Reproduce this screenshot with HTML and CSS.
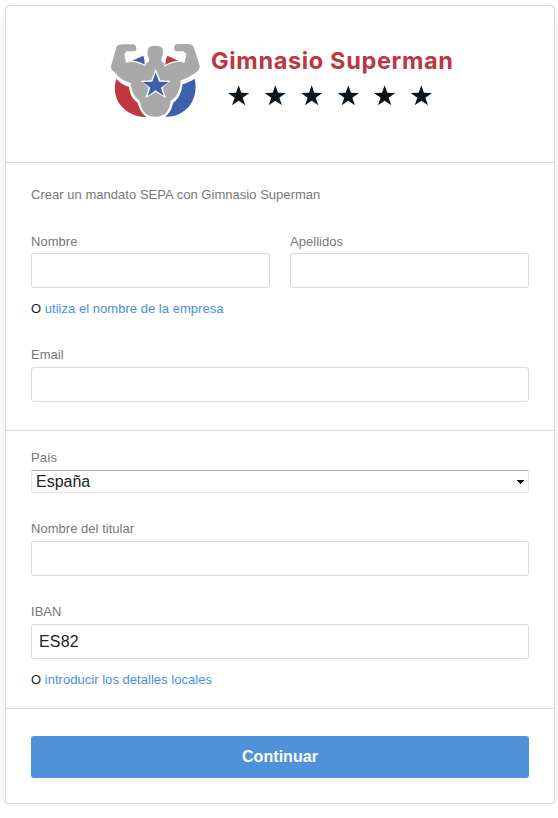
FILE: index.html
```html
<!DOCTYPE html>
<html lang="es">
<head>
<meta charset="utf-8">
<title>Gimnasio Superman</title>
<link rel="stylesheet" href="styles.css">
</head>
<body>
<main class="card">
  <header class="brand">
    <svg class="logo" viewBox="0 0 360 90" role="img" aria-label="Gimnasio Superman">
      <defs><path id="star" d="M0-32 8-10 32-9 12 5 20 28 0 14-20 28-12 5-32-9-8-10Z"/></defs>
      <g transform="scale(.33333)">
        <path fill="#bd3640" d="M49 131C40 158 45 190 62 211C81 234 108 247 140 246C126 237 119 222 113 203C97 193 90 178 87 156C73 151 60 144 49 131Z"/>
        <path fill="#3d60ad" d="M284 131C290 158 287 185 271 209C253 233 226 247 195 245C209 235 215 223 219 204C235 193 243 177 248 148C261 143 274 138 284 131Z"/>
        <path fill="#a9a9a9" d="M50 34Q58 27 71 28L101 28Q108 30 109 38Q111 47 102 49L81 49L74 55L74 66L78 84C92 77 107 80 119 86C133 89 143 84 148 78L146 67Q140 57 144 43Q145 32 166 32Q187 32 188 44Q192 57 185 67L184 78C189 84 199 89 212 86C224 80 239 77 253 84L258 66L258 55L250 49L230 49Q222 47 223 38Q222 30 230 28L263 27Q276 27 281 35L299 92Q299 105 289 112Q270 126 242 137C240 168 231 185 212 197C210 218 203 231 191 239Q167 252 142 239C129 231 123 217 119 197C102 186 95 170 92 145Q60 134 43 111Q32 104 33 93Z"/>
        <path fill="#fff" stroke="#fff" stroke-width="7" stroke-linejoin="round" d="M96 77 130 62Q135 75 134 89Q117 78 96 77ZM235 77 202 62Q196 75 196 90Q213 78 235 77Z"/>
        <path fill="#3d60ad" d="M96 77 130 62Q135 75 134 89Q117 78 96 77Z"/>
        <path fill="#bd3640" d="M235 77 202 62Q196 75 196 90Q213 78 235 77Z"/>
        <path fill="#fff" d="M167 101 181 136 212 137 188 158 198 190 167 171 136 190 146 158 122 137 154 136Z"/>
        <path fill="#3d60ad" d="M167 112 177 140 206 141 183 158 191 183 167 166 143 183 151 158 128 141 157 140Z"/>
        <g fill="#0b131b" transform="translate(315 183)">
          <use href="#star" x="101"/><use href="#star" x="211"/><use href="#star" x="320"/><use href="#star" x="430"/><use href="#star" x="539"/><use href="#star" x="649"/>
        </g>
      </g>
      <text class="wordmark" x="111" y="33.5" textLength="242" lengthAdjust="spacing">Gimnasio Superman</text>
    </svg>
  </header>
  <section class="customer">
    <p class="intro">Crear un mandato SEPA con Gimnasio Superman</p>
    <div class="names">
      <label class="field first">Nombre<input class="input" type="text"></label>
      <label class="field first">Apellidos<input class="input" type="text"></label>
    </div>
    <p class="hint">O <a class="link">utiiza el nombre de la empresa</a></p>
    <label class="field">Email<input class="input" type="text"></label>
  </section>
  <section class="account">
    <label class="field country">País
      <span class="select">España<svg class="arrow" viewBox="0 0 7 4"><path d="M0 0H7V1H6V2H5V3H4V4H3V3H2V2H1V1H0Z"/></svg></span>
    </label>
    <label class="field">Nombre del titular<input class="input" type="text"></label>
    <label class="field">IBAN<input class="input" type="text" value="ES82"></label>
    <p class="hint">O <a class="link">introducir los detalles locales</a></p>
  </section>
  <footer class="actions"><button class="submit">Continuar</button></footer>
</main>
</body>
</html>
```
FILE: styles.css
```css
* { box-sizing: border-box; }
body {
  margin: 0;
  padding: 5px 3px 0 5px;
  background: #fff;
  color: #222;
  font: 13px/20px "Liberation Sans", Arial, sans-serif;
  letter-spacing: .03px;
}
p { margin: 0; }
.card {
  height: 799px;
  border: 1px solid #dadada;
  border-radius: 4px;
  background: #fff;
  box-shadow: 0 6px 12px rgba(0, 0, 0, .09);
}
.brand {
  height: 157px;
  padding: 29px 0 0 94px;
  border-bottom: 1px solid #dadada;
}
.logo { display: block; width: 360px; height: 90px; }
.wordmark {
  fill: #bd3640;
  font: 700 23.5px Inter, "Open Sans", sans-serif;
  letter-spacing: 0;
}
.customer {
  height: 268px;
  padding: 22px 25px 0;
  border-bottom: 1px solid #dadada;
}
.intro { color: #777; }
.names {
  display: grid;
  grid-template-columns: 1fr 1fr;
  gap: 20px;
  margin-top: 27px;
}
.field { display: block; margin-top: 26px; color: #777; }
.first { margin-top: 0; }
.input {
  display: block;
  width: 100%;
  height: 35px;
  margin-top: 2px;
  padding: 0 7px;
  border: 1px solid #dadada;
  border-radius: 3px;
  background: #fff;
  color: #222;
  font: 16px "Liberation Sans", Arial, sans-serif;
  letter-spacing: .2px;
}
.first .input { margin-top: 1px; }
.hint { margin-top: 11px; }
.link { color: #4a90db; }
.account {
  height: 278px;
  padding: 17px 25px 0;
  border-bottom: 1px solid #dadada;
}
.country { margin-top: 0; }
.select {
  display: flex;
  align-items: center;
  justify-content: space-between;
  height: 23px;
  margin-top: 2px;
  padding: 0 4px;
  border: 1px solid #e2e3ea;
  border-top-color: #abadb3;
  border-radius: 2px;
  color: #222;
  font-size: 16px;
  letter-spacing: 0;
}
.arrow { width: 7px; height: 4px; fill: #000; }
.actions { padding: 27px 25px 0; }
.submit {
  display: block;
  width: 100%;
  height: 42px;
  border: 0;
  border-radius: 3px;
  background: #4f92da;
  color: #fff;
  font: 700 16px "Liberation Sans", Arial, sans-serif;
  letter-spacing: .05px;
}
```
